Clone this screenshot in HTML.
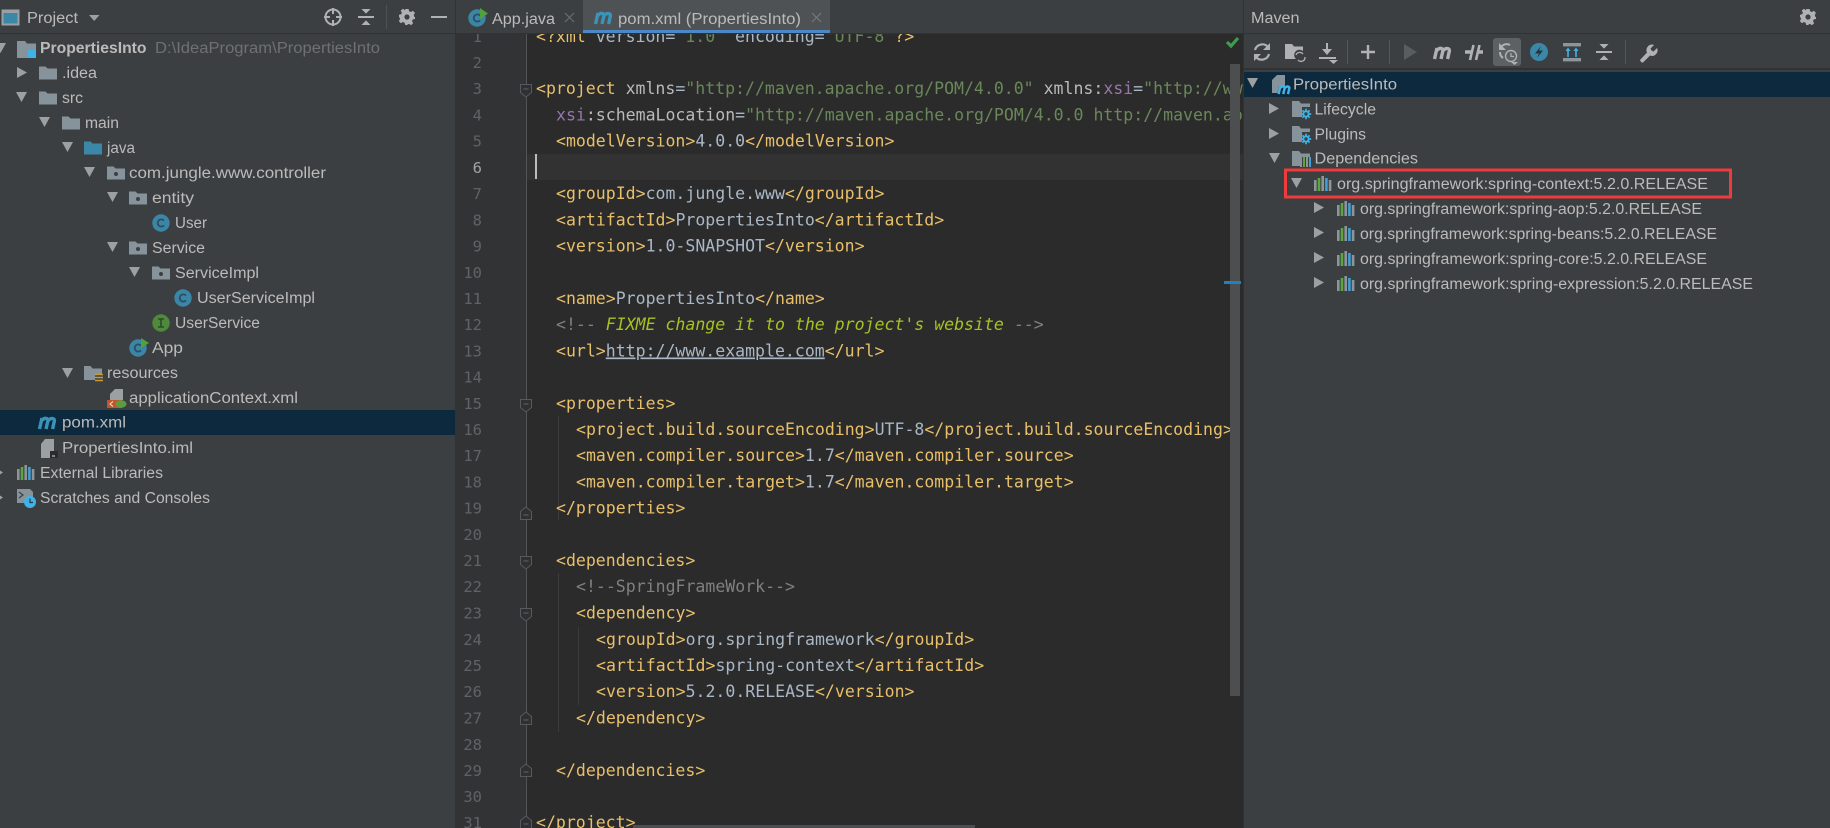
<!DOCTYPE html>
<html lang="en"><head><meta charset="utf-8"><title>Maven pom.xml</title>
<style>
html,body{margin:0;padding:0;background:#3c3f41;width:1830px;height:828px;overflow:hidden}
svg{display:block;filter:blur(.3px)}
.u{font-family:"Liberation Sans",sans-serif;font-size:15.5px;fill:#bbbbbb}
.m{font-family:"DejaVu Sans Mono","Liberation Mono",monospace;font-size:16.55px;fill:#a9b7c6;white-space:pre}
.n{font-family:"DejaVu Sans Mono","Liberation Mono",monospace;font-size:15.5px;fill:#606366;text-anchor:end}
.t{fill:#e8bf6a}.g{fill:#6a8759}.p{fill:#9876aa}.c{fill:#808080}.w{fill:#bababa}
.f{fill:#a8c023;font-style:italic}
</style></head><body>
<svg xmlns="http://www.w3.org/2000/svg" width="1830" height="828" viewBox="0 0 1830 828">
<defs>
<path id="ao" d="M0 0H11L5.5 10Z" fill="#9da0a2"/>
<path id="ar" d="M0 0L10 5.5L0 11Z" fill="#9da0a2"/>
<g id="fold"><path d="M0 1.5H6.5L8.5 3.5H18V14.5H0Z" fill="#87939a"/></g>
<g id="pkg"><path d="M0 1.5H6.5L8.5 3.5H18V14.5H0Z" fill="#87939a"/><circle cx="9" cy="9" r="2" fill="#3c3f41"/></g>
<g id="cls"><circle cx="9" cy="9" r="8.7" fill="#3b86a6"/><path d="M12 6.6A3.6 3.6 0 1 0 12 11.4" fill="none" stroke="#2c4f5f" stroke-width="1.8"/></g>
<g id="lib"><rect x="0" y="4" width="2.6" height="11" fill="#8d9599"/><rect x="3.7" y="2" width="2.6" height="13" fill="#5aa83c"/><rect x="7.4" y="0" width="2.6" height="15" fill="#8d9599"/><rect x="11.1" y="2" width="2.6" height="13" fill="#3f9fd6"/><rect x="14.8" y="4" width="2.6" height="11" fill="#8d9599"/></g>
<path id="mm" d="M1.5 14L4 3M4 5.5C6 2.5 10.3 2.5 9.8 6.2L8 14M9.8 6.2C12 2.5 17 2.5 16.3 6.2L14.6 14" fill="none" stroke-width="3.4"/>
<path id="gear" d="M-1.6-8H1.6L2.1-5.7 3.9-5 5.9-6.2 8-4 6.7-2.1 7.4 0 8 .1V2L5.8 2.4 5 4.2 6.2 6.1 4 8.2 2.1 6.9.8 7.4 .2 8H-1.8L-2.4 5.8-4.2 5-6.1 6.2-8.2 4-6.9 2.1-7.6.3-8-.2V-2.2L-5.8-2.7-5.1-4.4-6.3-6.3-4.1-8.2-2.2-6.9-1.8-7.2Z" fill="#afb1b3"/>
<g id="coll"><rect x="-8" y="-1" width="16" height="2" fill="#afb1b3"/><path d="M-4.5-8H4.5L0-3.4ZM-4.5 8H4.5L0 3.4Z" fill="#afb1b3"/></g>
<g id="fm"><path d="M.5 1.5H11.5V9.5L6 14L.5 9.5Z" fill="#2e3032" stroke="#575a5c" stroke-width="1"/><path d="M3.5 6H8.5" stroke="#606366"/></g>
<g id="fc"><path d="M.5 12.5H11.5V4.5L6 0L.5 4.5Z" fill="#2e3032" stroke="#575a5c" stroke-width="1"/><path d="M3.5 8H8.5" stroke="#606366"/></g>
<g id="bgear"><path d="M0-5.2V5.2M-5.2 0H5.2M-3.6-3.6L3.6 3.6M-3.6 3.6L3.6-3.6" stroke="#3fb3e8" stroke-width="1.7"/><circle r="3.6" fill="#3fb3e8"/><circle r="1.7" fill="#3c3f41"/></g>
<clipPath id="ed"><rect x="527" y="0" width="716" height="828"/></clipPath>
</defs>

<rect width="1830" height="828" fill="#3c3f41"/>

<!-- EDITOR -->
<rect x="456" y="33" width="71" height="795" fill="#313335"/>
<rect x="527" y="33" width="716" height="795" fill="#2b2b2b"/>
<rect x="527" y="154" width="716" height="26" fill="#323232"/>
<rect x="526" y="33" width="1" height="795" fill="#555"/>
<g stroke="#3b3b3b" stroke-width="1">
<path d="M558.5 416V520M558.5 573V732M578.5 627V705"/>
</g>
<rect x="535" y="154" width="2" height="25" fill="#bbbbbb"/>
<g class="n">
<text x="482" y="42">1</text><text x="482" y="68">2</text><text x="482" y="94">3</text><text x="482" y="120.5">4</text><text x="482" y="146.5">5</text>
<text x="482" y="173" style="fill:#a4a3a3">6</text><text x="482" y="199">7</text><text x="482" y="225.5">8</text><text x="482" y="251.5">9</text><text x="482" y="278">10</text>
<text x="482" y="304">11</text><text x="482" y="330">12</text><text x="482" y="356.5">13</text><text x="482" y="382.5">14</text><text x="482" y="409">15</text>
<text x="482" y="435">16</text><text x="482" y="461">17</text><text x="482" y="487.5">18</text><text x="482" y="513.5">19</text><text x="482" y="540">20</text>
<text x="482" y="566">21</text><text x="482" y="592">22</text><text x="482" y="618.5">23</text><text x="482" y="645">24</text><text x="482" y="671">25</text>
<text x="482" y="697">26</text><text x="482" y="723.5">27</text><text x="482" y="750">28</text><text x="482" y="776">29</text><text x="482" y="802">30</text>
<text x="482" y="828">31</text>
</g>
<use href="#fm" x="520" y="83"/><use href="#fm" x="520" y="398"/><use href="#fc" x="520" y="507"/><use href="#fm" x="520" y="555"/><use href="#fm" x="520" y="607"/><use href="#fc" x="520" y="712"/><use href="#fc" x="520" y="764"/><use href="#fc" x="520" y="816"/>

<g class="m" clip-path="url(#ed)">
<text x="536" y="42"><tspan class="t">&lt;?xml</tspan> version=<tspan class="g">"1.0"</tspan> encoding=<tspan class="g">"UTF-8"</tspan><tspan class="t">?&gt;</tspan></text>
<text x="536" y="94"><tspan class="t">&lt;project</tspan> <tspan class="w">xmlns</tspan>=<tspan class="g">"http://maven.apache.org/POM/4.0.0"</tspan> <tspan class="w">xmlns:</tspan><tspan class="p">xsi</tspan>=<tspan class="g">"http://www.w3.org/2001/XMLSchema-instance"</tspan></text>
<text x="556" y="120.5"><tspan class="p">xsi</tspan><tspan class="w">:schemaLocation</tspan>=<tspan class="g">"http://maven.apache.org/POM/4.0.0 http://maven.apache.org/xsd/maven-4.0.0.xsd"</tspan><tspan class="t">&gt;</tspan></text>
<text x="556" y="146.5"><tspan class="t">&lt;modelVersion&gt;</tspan>4.0.0<tspan class="t">&lt;/modelVersion&gt;</tspan></text>
<text x="556" y="199"><tspan class="t">&lt;groupId&gt;</tspan>com.jungle.www<tspan class="t">&lt;/groupId&gt;</tspan></text>
<text x="556" y="225.5"><tspan class="t">&lt;artifactId&gt;</tspan>PropertiesInto<tspan class="t">&lt;/artifactId&gt;</tspan></text>
<text x="556" y="251.5"><tspan class="t">&lt;version&gt;</tspan>1.0-SNAPSHOT<tspan class="t">&lt;/version&gt;</tspan></text>
<text x="556" y="304"><tspan class="t">&lt;name&gt;</tspan>PropertiesInto<tspan class="t">&lt;/name&gt;</tspan></text>
<text x="556" y="330"><tspan class="c">&lt;!-- </tspan><tspan class="f">FIXME change it to the project's website</tspan><tspan class="c"> --&gt;</tspan></text>
<text x="556" y="356.5"><tspan class="t">&lt;url&gt;</tspan><tspan style="text-decoration:underline">http://www.example.com</tspan><tspan class="t">&lt;/url&gt;</tspan></text>
<text x="556" y="409"><tspan class="t">&lt;properties&gt;</tspan></text>
<text x="576" y="435"><tspan class="t">&lt;project.build.sourceEncoding&gt;</tspan>UTF-8<tspan class="t">&lt;/project.build.sourceEncoding&gt;</tspan></text>
<text x="576" y="461"><tspan class="t">&lt;maven.compiler.source&gt;</tspan>1.7<tspan class="t">&lt;/maven.compiler.source&gt;</tspan></text>
<text x="576" y="487.5"><tspan class="t">&lt;maven.compiler.target&gt;</tspan>1.7<tspan class="t">&lt;/maven.compiler.target&gt;</tspan></text>
<text x="556" y="513.5"><tspan class="t">&lt;/properties&gt;</tspan></text>
<text x="556" y="566"><tspan class="t">&lt;dependencies&gt;</tspan></text>
<text x="576" y="592"><tspan class="c">&lt;!--SpringFrameWork--&gt;</tspan></text>
<text x="576" y="618.5"><tspan class="t">&lt;dependency&gt;</tspan></text>
<text x="596" y="645"><tspan class="t">&lt;groupId&gt;</tspan>org.springframework<tspan class="t">&lt;/groupId&gt;</tspan></text>
<text x="596" y="671"><tspan class="t">&lt;artifactId&gt;</tspan>spring-context<tspan class="t">&lt;/artifactId&gt;</tspan></text>
<text x="596" y="697"><tspan class="t">&lt;version&gt;</tspan>5.2.0.RELEASE<tspan class="t">&lt;/version&gt;</tspan></text>
<text x="576" y="723.5"><tspan class="t">&lt;/dependency&gt;</tspan></text>
<text x="556" y="776"><tspan class="t">&lt;/dependencies&gt;</tspan></text>
<text x="536" y="828"><tspan class="t">&lt;/project&gt;</tspan></text>
</g>

<!-- editor scrollbars/markers -->
<rect x="1230" y="64" width="10" height="632" fill="#4d4e4f"/>
<rect x="1224" y="281" width="17" height="3" fill="#1e83b8"/>
<rect x="633" y="825" width="342" height="3" fill="#4d4e4f"/>
<path d="M1227 42L1231 46L1238 38" fill="none" stroke="#3e9c4c" stroke-width="3.2"/>

<!-- TABS -->
<rect x="455" y="0" width="790" height="33" fill="#3c3f41"/>
<rect x="455" y="33" width="790" height="1" fill="#323232"/>
<rect x="583" y="0" width="247" height="33" fill="#4e5254"/>
<rect x="583" y="30" width="247" height="3" fill="#4a88c7"/>
<rect x="455" y="0" width="1" height="828" fill="#323232"/>
<use href="#cls" x="468" y="9"/>
<path d="M480 8V19L488 13.5Z" fill="#4fa23c"/>
<text class="u" x="492" y="24" textLength="63" lengthAdjust="spacingAndGlyphs">App.java</text>
<path d="M565 13L574 22M574 13L565 22" stroke="#6a6d6f" stroke-width="1.2"/>
<use href="#mm" x="594" y="10" stroke="#3a93b8"/>
<text class="u" x="618" y="24" textLength="183" lengthAdjust="spacingAndGlyphs">pom.xml (PropertiesInto)</text>
<path d="M812 13L821 22M821 13L812 22" stroke="#777a7c" stroke-width="1.2"/>

<!-- PROJECT PANEL -->
<rect x="455" y="0" width="1" height="828" fill="#323232"/>
<rect x="0" y="33" width="455" height="1" fill="#323232"/>
<rect x="2.5" y="10.5" width="16" height="14" fill="#3a87a8" stroke="#9da0a2" stroke-width="2"/>
<rect x="2" y="10" width="17" height="3" fill="#9da0a2"/>
<text class="u" x="27" y="23" textLength="51" lengthAdjust="spacingAndGlyphs">Project</text>
<path d="M89 15H99.5L94.2 21Z" fill="#9da0a2"/>
<g fill="none" stroke="#afb1b3" stroke-width="2"><circle cx="333" cy="17" r="7.5"/><path d="M333 8V14M333 20V26M324 17H330M336 17H342"/></g>
<g transform="translate(366,17)"><use href="#coll"/></g>
<rect x="386" y="5" width="1" height="24" fill="#4e5254"/>
<g transform="translate(407,17)"><use href="#gear"/><circle r="2.6" fill="#3c3f41"/></g>
<rect x="431" y="16" width="16" height="2" fill="#afb1b3"/>

<rect x="0" y="410" width="455" height="25" fill="#0d293e"/>

<use href="#ao" x="-5" y="43"/>
<path d="M17 41H25L27 43.5H36V50H28V58H17Z" fill="#87939a"/><rect x="28" y="50" width="8" height="8" fill="#3fb3e8"/>
<text class="u" x="40" y="53" style="font-weight:bold" textLength="106.5" lengthAdjust="spacingAndGlyphs">PropertiesInto</text>
<text class="u" x="155" y="53" style="fill:#6f7072" textLength="225" lengthAdjust="spacingAndGlyphs">D:\IdeaProgram\PropertiesInto</text>

<use href="#ar" x="17" y="67"/><use href="#fold" x="39" y="65"/>
<text class="u" x="62" y="78" textLength="35" lengthAdjust="spacingAndGlyphs">.idea</text>
<use href="#ao" x="16" y="92"/><use href="#fold" x="39" y="90"/>
<text class="u" x="62" y="103" textLength="21" lengthAdjust="spacingAndGlyphs">src</text>
<use href="#ao" x="39" y="117"/><use href="#fold" x="62" y="115"/>
<text class="u" x="85" y="128" textLength="34" lengthAdjust="spacingAndGlyphs">main</text>
<use href="#ao" x="62" y="142"/><path d="M84 141.5H90.5L92.5 143.5H102V154.5H84Z" fill="#3a87a8"/>
<text class="u" x="107" y="153" textLength="28" lengthAdjust="spacingAndGlyphs">java</text>
<use href="#ao" x="84" y="167"/><use href="#pkg" x="107" y="165"/>
<text class="u" x="129" y="178" textLength="197" lengthAdjust="spacingAndGlyphs">com.jungle.www.controller</text>
<use href="#ao" x="107" y="192"/><use href="#pkg" x="129" y="190"/>
<text class="u" x="152" y="203" textLength="42" lengthAdjust="spacingAndGlyphs">entity</text>
<use href="#cls" x="152" y="214"/>
<text class="u" x="175" y="228" textLength="32" lengthAdjust="spacingAndGlyphs">User</text>
<use href="#ao" x="107" y="242"/><use href="#pkg" x="129" y="240"/>
<text class="u" x="152" y="253" textLength="53" lengthAdjust="spacingAndGlyphs">Service</text>
<use href="#ao" x="129" y="267"/><use href="#pkg" x="152" y="265"/>
<text class="u" x="175" y="278" textLength="84" lengthAdjust="spacingAndGlyphs">ServiceImpl</text>
<use href="#cls" x="174" y="289"/>
<text class="u" x="197" y="303" textLength="118" lengthAdjust="spacingAndGlyphs">UserServiceImpl</text>
<circle cx="161" cy="323" r="8.7" fill="#4f8a3c"/><path d="M158 319H164M158 327H164M161 319V327" stroke="#2e4a28" stroke-width="1.6"/>
<text class="u" x="175" y="328" textLength="85" lengthAdjust="spacingAndGlyphs">UserService</text>
<use href="#cls" x="129" y="339"/><path d="M141 338V348L149 343Z" fill="#4fa23c"/>
<text class="u" x="152" y="353" textLength="31" lengthAdjust="spacingAndGlyphs">App</text>
<use href="#ao" x="62" y="368"/><path d="M84 366H90.5L92.5 368.5H102V374H95V380H84Z" fill="#87939a"/>
<path d="M95 374.5H103M95 377.5H103M95 380.5H103" stroke="#c79a3a" stroke-width="1.6"/>
<text class="u" x="107" y="378" textLength="71" lengthAdjust="spacingAndGlyphs">resources</text>
<path d="M115 389H123V400H110V394Z" fill="#9aa0a3"/><rect x="107" y="400" width="15" height="8" fill="#c2562a"/>
<ellipse cx="121" cy="404" rx="5.5" ry="3.8" fill="#5c9e3f"/><path d="M113 401.5L110 404L113 406.5" stroke="#e8e8e8" fill="none"/>
<text class="u" x="129" y="403" textLength="169" lengthAdjust="spacingAndGlyphs">applicationContext.xml</text>
<use href="#mm" x="38" y="415" stroke="#3a93b8"/>
<text class="u" x="62" y="427.5" textLength="64" lengthAdjust="spacingAndGlyphs">pom.xml</text>
<path d="M45 439H54V451H50V458H41V444Z" fill="#9aa0a3"/><rect x="50" y="451" width="8" height="7" fill="#2a2a2a"/><rect x="52" y="455.5" width="3" height="1" fill="#ddd"/>
<text class="u" x="62" y="453" textLength="131" lengthAdjust="spacingAndGlyphs">PropertiesInto.iml</text>
<path d="M0 470.5L3 472.5L0 474.5Z" fill="#9da0a2"/><use href="#lib" x="17" y="465"/>
<text class="u" x="40" y="478" textLength="123" lengthAdjust="spacingAndGlyphs">External Libraries</text>
<path d="M0 495.5L3 497.5L0 499.5Z" fill="#9da0a2"/>
<path d="M17 489H30L33 492V497H28V503H17Z" fill="#87939a"/><path d="M19 492L23 495L19 498" stroke="#3c3f41" stroke-width="1.2" fill="none"/>
<circle cx="30" cy="502" r="6" fill="#3fb3e8"/><path d="M30 498.5V502.5H33" stroke="#1d3c4c" stroke-width="1.2" fill="none"/>
<text class="u" x="40" y="503" textLength="170" lengthAdjust="spacingAndGlyphs">Scratches and Consoles</text>

<!-- MAVEN PANEL -->
<rect x="1243" y="0" width="587" height="828" fill="#3c3f41"/>
<rect x="1243" y="0" width="1" height="828" fill="#323232"/>
<rect x="1243" y="33" width="587" height="1" fill="#323232"/>
<text class="u" x="1251" y="23" textLength="48.5" lengthAdjust="spacingAndGlyphs">Maven</text>
<g transform="translate(1808,17)"><use href="#gear"/><circle r="2.6" fill="#3c3f41"/></g>
<rect x="1243" y="68" width="587" height="2" fill="#323232"/>

<!-- toolbar -->
<g fill="none" stroke="#afb1b3" stroke-width="2.2">
<path d="M1255 50A7.5 7.5 0 0 1 1268 47M1269 54A7.5 7.5 0 0 1 1256 57"/>
</g>
<path d="M1270 43V50H1263ZM1254 61V54H1261Z" fill="#afb1b3"/>
<path d="M1285 44H1292L1294 46.5H1303V51A5 5 0 0 0 1296 59H1285Z" fill="#afb1b3"/>
<g fill="none" stroke="#afb1b3" stroke-width="1.3"><path d="M1296 55A4 4 0 0 1 1303 54M1305 57A4 4 0 0 1 1298 60"/></g>
<path d="M1327 43V53" stroke="#afb1b3" stroke-width="2"/><path d="M1322 49H1332L1327 55Z" fill="#afb1b3"/>
<rect x="1319" y="57" width="17" height="2" fill="#afb1b3"/><path d="M1329 60H1338L1333.5 64Z" fill="#afb1b3"/>
<rect x="1347" y="40" width="1" height="24" fill="#55585a"/>
<path d="M1368 45V59M1361 52H1375" stroke="#afb1b3" stroke-width="2.4"/>
<rect x="1389" y="40" width="1" height="24" fill="#55585a"/>
<path d="M1404 44V60L1417 52Z" fill="#5a5d5f"/>
<use href="#mm" x="1433" y="45" stroke="#afb1b3"/>
<path d="M1465 52H1471M1478 52H1483" stroke="#afb1b3" stroke-width="3.4"/><path d="M1470 60L1473.5 45M1476 60L1479.5 45" stroke="#afb1b3" stroke-width="2.6"/>
<rect x="1493" y="38" width="28" height="28" rx="3" fill="#5c6164"/>
<path d="M1500 49A7 7 0 0 1 1510 45" fill="none" stroke="#afb1b3" stroke-width="2"/><path d="M1499 43V50H1506Z" fill="#afb1b3"/><path d="M1500 52A7 7 0 0 0 1503 58" fill="none" stroke="#afb1b3" stroke-width="2"/>
<circle cx="1511" cy="56" r="5.5" fill="#5c6164" stroke="#afb1b3" stroke-width="1.4"/><path d="M1511 53V56.5H1514" fill="none" stroke="#afb1b3" stroke-width="1.2"/><path d="M1511 62H1518L1514.5 65Z" fill="#afb1b3"/>
<circle cx="1539" cy="52" r="9" fill="#3a87a8"/><path d="M1541 46L1535 53.5H1539L1537 58L1543 50.5H1539Z" fill="#27343c"/>
<rect x="1563" y="43" width="18" height="3.4" fill="#8d9599"/><rect x="1563" y="58" width="18" height="3.4" fill="#8d9599"/>
<path d="M1568 57V50M1576 57V50" stroke="#3fb3e8" stroke-width="1.6"/><path d="M1565.5 51L1568 47.5L1570.5 51ZM1573.5 51L1576 47.5L1578.5 51Z" fill="#3fb3e8"/>
<g transform="translate(1604,52)"><use href="#coll"/></g>
<rect x="1625" y="40" width="1" height="24" fill="#55585a"/>
<path d="M1640 60L1647 52.5A5.5 5.5 0 0 1 1654 45L1650.5 48.5L1651.5 50.5L1653.5 51.5L1657 48A5.5 5.5 0 0 1 1650 55.5L1643 62.5Q1641 63 1640 60Z" fill="#afb1b3"/>

<!-- maven tree -->
<rect x="1244" y="72" width="586" height="25" fill="#0d293e"/>
<use href="#ao" x="1247" y="78"/>
<path d="M1277 75H1285V86H1279L1277.5 93H1272V80Z" fill="#87939a"/>
<g transform="translate(1277.5,84) scale(.72)"><use href="#mm" stroke="#3fb3e8"/></g>
<text class="u" x="1293" y="89.5" textLength="104" lengthAdjust="spacingAndGlyphs">PropertiesInto</text>
<use href="#ar" x="1269" y="103"/>
<path d="M1292 101H1299L1301 103.5H1310V107H1302V117H1292Z" fill="#87939a"/>
<use href="#bgear" x="1306" y="114"/>
<text class="u" x="1314.5" y="114.5" textLength="61.5" lengthAdjust="spacingAndGlyphs">Lifecycle</text>
<use href="#ar" x="1269" y="128"/>
<path d="M1292 126H1299L1301 128.5H1310V132H1302V142H1292Z" fill="#87939a"/>
<use href="#bgear" x="1306" y="139"/>
<text class="u" x="1314.5" y="139.5" textLength="51.5" lengthAdjust="spacingAndGlyphs">Plugins</text>
<use href="#ao" x="1269" y="153"/>
<path d="M1292 151H1299L1301 153.5H1310V157H1302V166H1292Z" fill="#87939a"/>
<rect x="1300" y="160" width="2" height="7" fill="#8d9599"/><rect x="1303" y="157" width="2" height="10" fill="#5aa83c"/><rect x="1306" y="155" width="2" height="12" fill="#8d9599"/><rect x="1309" y="157" width="2" height="10" fill="#3f9fd6"/>
<text class="u" x="1314.5" y="163.5" textLength="103.5" lengthAdjust="spacingAndGlyphs">Dependencies</text>
<use href="#ao" x="1291" y="178"/><use href="#lib" x="1314" y="176"/>
<text class="u" x="1337" y="189" textLength="371" lengthAdjust="spacingAndGlyphs">org.springframework:spring-context:5.2.0.RELEASE</text>
<use href="#ar" x="1314" y="202"/><use href="#lib" x="1337" y="201"/>
<text class="u" x="1360" y="214" textLength="342" lengthAdjust="spacingAndGlyphs">org.springframework:spring-aop:5.2.0.RELEASE</text>
<use href="#ar" x="1314" y="227"/><use href="#lib" x="1337" y="226"/>
<text class="u" x="1360" y="239" textLength="357" lengthAdjust="spacingAndGlyphs">org.springframework:spring-beans:5.2.0.RELEASE</text>
<use href="#ar" x="1314" y="252"/><use href="#lib" x="1337" y="251"/>
<text class="u" x="1360" y="264" textLength="347" lengthAdjust="spacingAndGlyphs">org.springframework:spring-core:5.2.0.RELEASE</text>
<use href="#ar" x="1314" y="277"/><use href="#lib" x="1337" y="276"/>
<text class="u" x="1360" y="289" textLength="393" lengthAdjust="spacingAndGlyphs">org.springframework:spring-expression:5.2.0.RELEASE</text>
<rect x="1285.5" y="170" width="445" height="27" fill="none" stroke="#ee3b3b" stroke-width="3"/>
</svg>
</body></html>
